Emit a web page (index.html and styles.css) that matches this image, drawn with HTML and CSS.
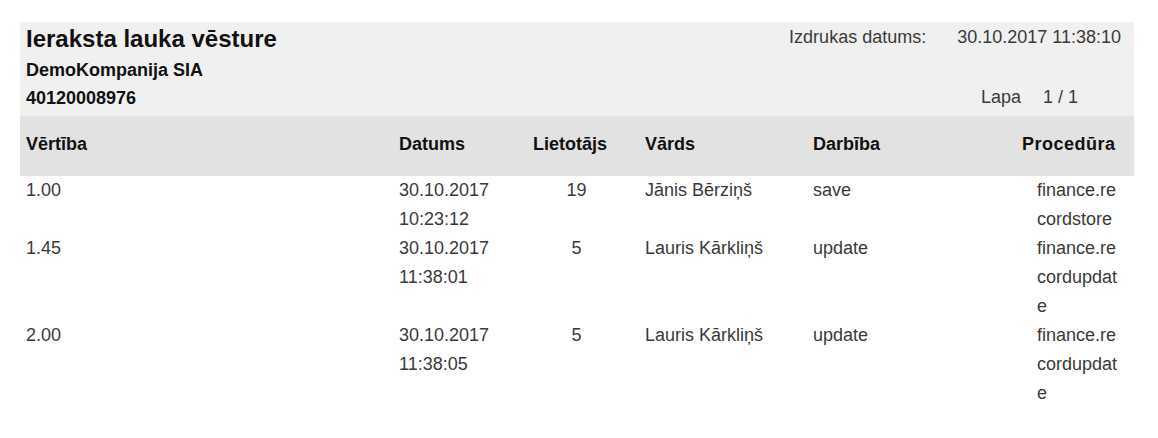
FILE: index.html
```html
<!DOCTYPE html>
<html lang="lv">
<head>
<meta charset="utf-8">
<title>Ieraksta lauka vēsture</title>
<link rel="stylesheet" href="styles.css">
</head>
<body>
<div class="report">
  <div class="report-head">
    <div class="head-left">
      <div class="title">Ieraksta lauka vēsture</div>
      <div class="company">DemoKompanija SIA</div>
      <div class="regno">40120008976</div>
    </div>
    <div class="head-right">
      <div class="print-row">
        <span>Izdrukas datums:</span>
        <span>30.10.2017 11:38:10</span>
      </div>
      <div class="page-row">
        <span>Lapa</span>
        <span>1 / 1</span>
      </div>
    </div>
  </div>
  <table class="grid">
    <colgroup>
      <col class="c-val">
      <col class="c-date">
      <col class="c-user">
      <col class="c-name">
      <col class="c-act">
      <col class="c-proc">
    </colgroup>
    <thead>
      <tr>
        <th class="val">Vērtība</th>
        <th>Datums</th>
        <th>Lietotājs</th>
        <th class="name">Vārds</th>
        <th>Darbība</th>
        <th class="proc-h">Procedūra</th>
      </tr>
    </thead>
    <tbody>
      <tr>
        <td class="val">1.00</td>
        <td>30.10.2017 10:23:12</td>
        <td class="user">19</td>
        <td class="name">Jānis Bērziņš</td>
        <td>save</td>
        <td class="proc">finance.recordstore</td>
      </tr>
      <tr>
        <td class="val">1.45</td>
        <td>30.10.2017 11:38:01</td>
        <td class="user">5</td>
        <td class="name">Lauris Kārkliņš</td>
        <td>update</td>
        <td class="proc">finance.recordupdate</td>
      </tr>
      <tr>
        <td class="val">2.00</td>
        <td>30.10.2017 11:38:05</td>
        <td class="user">5</td>
        <td class="name">Lauris Kārkliņš</td>
        <td>update</td>
        <td class="proc">finance.recordupdate</td>
      </tr>
    </tbody>
  </table>
</div>
</body>
</html>
```

FILE: styles.css
```css
html, body {
  margin: 0;
  padding: 0;
  background: #ffffff;
}

body {
  font-family: "Liberation Sans", Arial, Helvetica, sans-serif;
  font-size: 18px;
  color: #3a3a3a;
}

.report {
  margin: 22px 0 0 20px;
  width: 1114px;
}

.report-head {
  display: flex;
  justify-content: space-between;
  background: #f0f0f0;
  height: 94px;
}

.head-left {
  padding-left: 6px;
  color: #111111;
  font-weight: bold;
}

.title {
  font-size: 24px;
  line-height: 34px;
}

.company,
.regno {
  font-size: 18px;
  line-height: 28px;
}

.head-right {
  display: flex;
  flex-direction: column;
  align-items: flex-end;
  padding: 1px 13px 0 0;
  color: #3a3a3a;
  line-height: 28px;
}

.print-row {
  display: flex;
  gap: 31px;
}

.page-row {
  display: flex;
  gap: 22px;
  margin-top: 32px;
  margin-right: 43px;
}

.grid {
  width: 1114px;
  border-collapse: collapse;
  table-layout: fixed;
}

.c-val { width: 379px; }
.c-date { width: 134px; }
.c-user { width: 87px; }
.c-name { width: 193px; }
.c-act { width: 209px; }
.c-proc { width: 112px; }

.grid thead tr {
  background: #e2e2e2;
}

.grid th {
  font-weight: bold;
  color: #111111;
  text-align: left;
  line-height: 29px;
  padding: 14px 0 17px 0;
  vertical-align: top;
}

.grid td {
  padding: 0;
  line-height: 29px;
  vertical-align: top;
}

.grid .val {
  padding-left: 6px;
}

.grid .name {
  padding-left: 25px;
}

.grid .user {
  text-align: center;
}

.grid .proc-h {
  letter-spacing: 0.5px;
}

.grid .proc {
  padding-left: 15px;
  padding-right: 13px;
  word-break: break-all;
}
```
